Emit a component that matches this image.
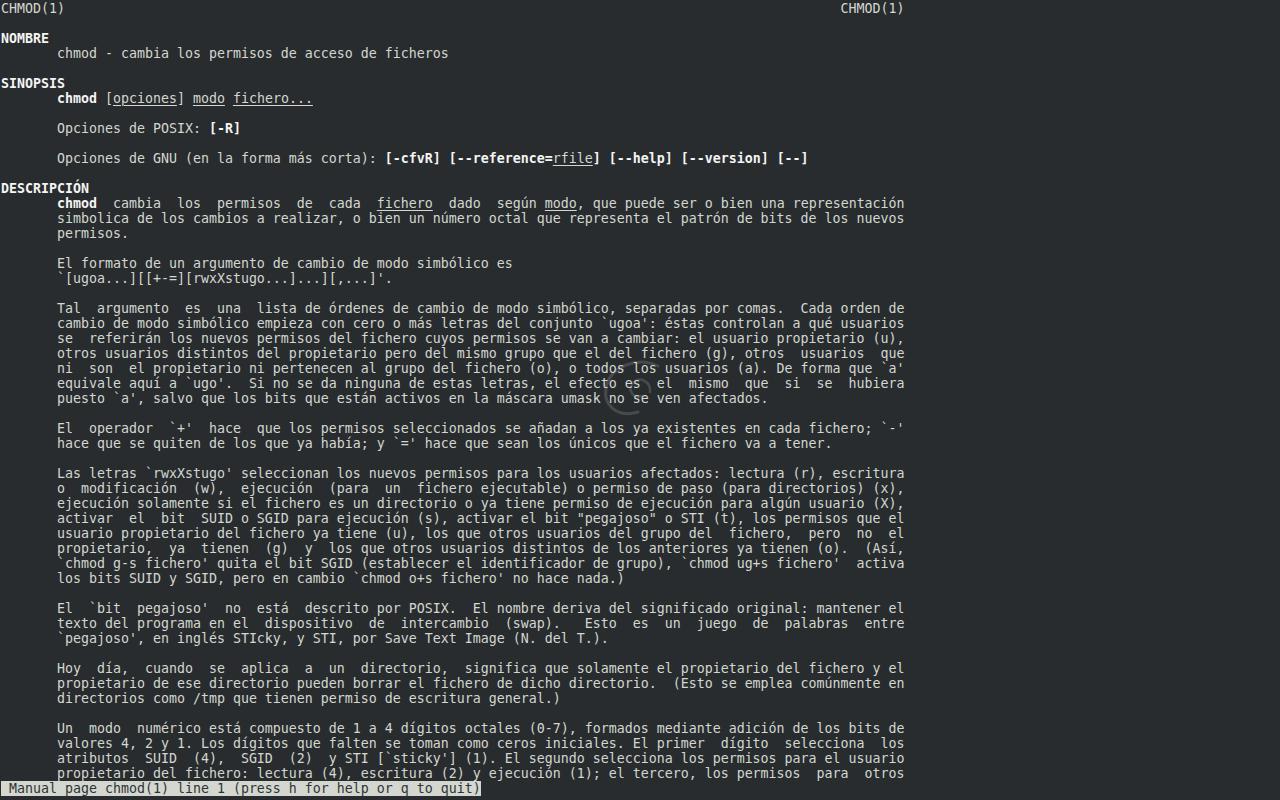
import React from "react";

type Seg = { t: string; b?: boolean; u?: boolean };
type Line = Seg[];

const W = 106;
const IND = "       ";

// spread extra blanks over the gaps, starting left or right (like groff does)
function just(s: string, dir: "L" | "R"): string {
     const parts = s.split(/( +)/);
     const words = parts.filter((_, i) => i % 2 === 0);
     const gaps = parts.filter((_, i) => i % 2 === 1).map((g) => g.length);
     const extra = W - s.length;
     const n = gaps.length;
     if (extra > 0 && n > 0) {
          const base = Math.floor(extra / n);
          const rem = extra % n;
          for (let i = 0; i < n; i++) {
               const idx = dir === "L" ? i : n - 1 - i;
               gaps[idx] += base + (i < rem ? 1 : 0);
          }
     }
     let out = "";
     words.forEach((w, i) => {
          out += w;
          if (i < n) out += " ".repeat(gaps[i]);
     });
     return out;
}

const p = (s: string): Line => [{ t: IND + s }];
const j = (s: string, dir: "L" | "R"): Line => [{ t: IND + just(s, dir) }];
const h = (s: string): Line => [{ t: s, b: true }];
const blank: Line = [];

const lines: Line[] = [
     [{ t: "CHMOD(1)" + " ".repeat(97) + "CHMOD(1)" }],
     blank,
     h("NOMBRE"),
     p("chmod - cambia los permisos de acceso de ficheros"),
     blank,
     h("SINOPSIS"),
     [
          { t: IND },
          { t: "chmod", b: true },
          { t: " [" },
          { t: "opciones", u: true },
          { t: "] " },
          { t: "modo", u: true },
          { t: " " },
          { t: "fichero...", u: true },
     ],
     blank,
     [{ t: IND + "Opciones de POSIX: " }, { t: "[-R]", b: true }],
     blank,
     [
          { t: IND + "Opciones de GNU (en la forma más corta): " },
          { t: "[-cfvR] [--reference=", b: true },
          { t: "rfile", u: true },
          { t: "] [--help] [--version] [--]", b: true },
     ],
     blank,
     h("DESCRIPCIÓN"),
     [
          { t: IND },
          { t: "chmod", b: true },
          { t: "  cambia  los  permisos  de  cada  " },
          { t: "fichero", u: true },
          { t: "  dado  según " },
          { t: "modo", u: true },
          { t: ", que puede ser o bien una representación" },
     ],
     j("simbolica de los cambios a realizar, o bien un número octal que representa el patrón de bits de los nuevos", "R"),
     p("permisos."),
     blank,
     p("El formato de un argumento de cambio de modo simbólico es"),
     p("`[ugoa...][[+-=][rwxXstugo...]...][,...]'."),
     blank,
     j("Tal argumento es una lista de órdenes de cambio de modo simbólico, separadas por comas.  Cada orden de", "L"),
     j("cambio de modo simbólico empieza con cero o más letras del conjunto `ugoa': éstas controlan a qué usuarios", "R"),
     j("se referirán los nuevos permisos del fichero cuyos permisos se van a cambiar: el usuario propietario (u),", "L"),
     j("otros usuarios distintos del propietario pero del mismo grupo que el del fichero (g), otros usuarios que", "R"),
     j("ni son el propietario ni pertenecen al grupo del fichero (o), o todos los usuarios (a). De forma que `a'", "L"),
     j("equivale aquí a `ugo'.  Si no se da ninguna de estas letras, el efecto es el mismo que si se hubiera", "R"),
     p("puesto `a', salvo que los bits que están activos en la máscara umask no se ven afectados."),
     blank,
     j("El operador `+' hace que los permisos seleccionados se añadan a los ya existentes en cada fichero; `-'", "L"),
     p("hace que se quiten de los que ya había; y `=' hace que sean los únicos que el fichero va a tener."),
     blank,
     j("Las letras `rwxXstugo' seleccionan los nuevos permisos para los usuarios afectados: lectura (r), escritura", "R"),
     j("o modificación (w), ejecución (para un fichero ejecutable) o permiso de paso (para directorios) (x),", "L"),
     j("ejecución solamente si el fichero es un directorio o ya tiene permiso de ejecución para algún usuario (X),", "R"),
     j('activar el bit SUID o SGID para ejecución (s), activar el bit "pegajoso" o STI (t), los permisos que el', "L"),
     j("usuario propietario del fichero ya tiene (u), los que otros usuarios del grupo del fichero, pero no el", "R"),
     j("propietario, ya tienen (g) y los que otros usuarios distintos de los anteriores ya tienen (o).  (Así,", "L"),
     j("`chmod g-s fichero' quita el bit SGID (establecer el identificador de grupo), `chmod ug+s fichero' activa", "R"),
     p("los bits SUID y SGID, pero en cambio `chmod o+s fichero' no hace nada.)"),
     blank,
     j("El `bit pegajoso' no está descrito por POSIX.  El nombre deriva del significado original: mantener el", "L"),
     j("texto del programa en el dispositivo de intercambio (swap).  Esto es un juego de palabras entre", "R"),
     p("`pegajoso', en inglés STIcky, y STI, por Save Text Image (N. del T.)."),
     blank,
     j("Hoy día, cuando se aplica a un directorio, significa que solamente el propietario del fichero y el", "L"),
     j("propietario de ese directorio pueden borrar el fichero de dicho directorio.  (Esto se emplea comúnmente en", "R"),
     p("directorios como /tmp que tienen permiso de escritura general.)"),
     blank,
     j("Un modo numérico está compuesto de 1 a 4 dígitos octales (0-7), formados mediante adición de los bits de", "L"),
     j("valores 4, 2 y 1. Los dígitos que falten se toman como ceros iniciales. El primer dígito selecciona los", "R"),
     j("atributos SUID (4), SGID (2) y STI [`sticky'] (1). El segundo selecciona los permisos para el usuario", "L"),
     j("propietario del fichero: lectura (4), escritura (2) y ejecución (1); el tercero, los permisos para otros", "R"),
];

function Swirl() {
     return (
          <svg className="absolute left-[592px] top-[352px] pointer-events-none" width="80" height="76" viewBox="0 0 80 76" fill="none">
               <path d="M66 14 C46 4, 18 14, 14 36 C11 54, 26 66, 46 60" stroke="#ffffff" strokeOpacity="0.14" strokeWidth="3" strokeLinecap="round" />
               <path d="M58 40 C59 29, 47 24, 41 31 C35 38, 41 47, 50 44" stroke="#ffffff" strokeOpacity="0.14" strokeWidth="2.5" strokeLinecap="round" />
          </svg>
     );
}

export default function App() {
     return (
          <div className="relative w-[1280px] h-[800px] overflow-hidden bg-[#292c2f] text-[#d3d7cf] whitespace-pre text-[13.29px] leading-[15px] font-['DejaVu_Sans_Mono',monospace] pt-px pl-px">
               <Swirl />
               <div className="relative">
                    {lines.map((ln, i) => (
                         <div key={i} className="h-[15px]">
                              {ln.map((s, k) => (
                                   <span
                                        key={k}
                                        className={
                                             (s.b ? "font-bold text-[#f4f4f2] " : "") +
                                             (s.u ? "underline decoration-1 underline-offset-2" : "")
                                        }
                                   >
                                        {s.t}
                                   </span>
                              ))}
                         </div>
                    ))}
                    <div className="h-[15px]">
                         <span className="bg-[#d3d7cf] text-[#2e3436]"> Manual page chmod(1) line 1 (press h for help or q to quit)</span>
                    </div>
               </div>
          </div>
     );
}
